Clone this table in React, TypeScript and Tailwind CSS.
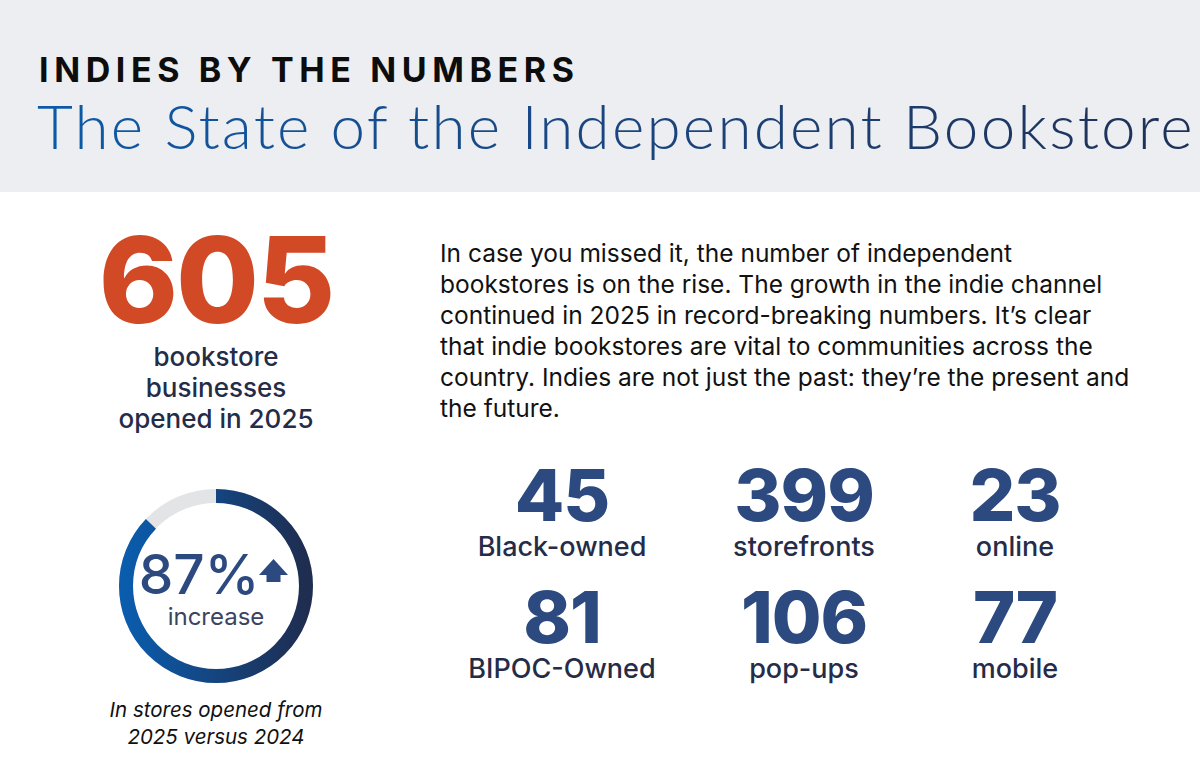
import React from "react";

function Ring() {
  const r = 90;
  const c = 2 * Math.PI * r;
  const blue = c * 0.87;
  return (
    <svg width="196" height="196" viewBox="0 0 196 196" className="absolute inset-0">
      <defs>
        <linearGradient id="rg" x1="0" y1="0" x2="0" y2="1">
          <stop offset="0" stopColor="#0a5cad" />
          <stop offset="1" stopColor="#1f2d50" />
        </linearGradient>
      </defs>
      <circle cx="98" cy="98" r={r} fill="none" stroke="#e3e4e6" strokeWidth="14" />
      <circle
        cx="98"
        cy="98"
        r={r}
        fill="none"
        stroke="url(#rg)"
        strokeWidth="14"
        strokeDasharray={`${blue} ${c}`}
        transform="rotate(-90 98 98)"
      />
    </svg>
  );
}

function Stat({ n, label }: { n: string; label: string }) {
  return (
    <div className="flex flex-col items-center">
      <div className="text-[72px] leading-[74px] font-extrabold text-[#2c4a7f] tracking-[-1px]">{n}</div>
      <div className="text-[27px] leading-[30px] font-medium text-[#252c48]">{label}</div>
    </div>
  );
}

export default function App() {
  return (
    <div className="w-[1200px] h-[766px] bg-white overflow-hidden" style={{ fontFamily: "Inter, 'Noto Sans', sans-serif" }}>
      <header className="h-[192px] bg-[#eceef1] pl-[39px] pt-[50px]">
        <div className="text-[34px] leading-[40px] font-bold tracking-[5.6px] text-[#0d0d0d]">
          INDIES BY THE NUMBERS
        </div>
        <div
          className="text-[62px] leading-[70px] font-light tracking-[2.2px] bg-gradient-to-r from-[#0b5aa8] to-[#1d3158] bg-clip-text text-transparent w-fit -ml-[2px]"
          style={{ fontFamily: "Lato, 'Noto Sans', sans-serif" }}
        >
          The State of the Independent Bookstore
        </div>
      </header>
      <main className="flex">
        <section className="w-[432px] flex flex-col items-center pt-[28px]">
          <div className="text-[120px] leading-[120px] font-extrabold text-[#d24a25] tracking-[-2px]">605</div>
          <div className="text-[26px] leading-[31px] font-medium text-[#252c48] text-center mt-[1px]">
            bookstore
            <br />
            businesses
            <br />
            opened in 2025
          </div>
          <div className="relative w-[196px] h-[196px] mt-[54px]">
            <Ring />
            <div className="absolute inset-0 flex flex-col items-center pt-[58px]">
              <div className="flex items-center mr-[5px]">
                <span className="text-[55px] leading-[56px] font-medium text-[#2c4a7f]">87%</span>
                <svg width="29" height="23" viewBox="0 0 29 23" className="mb-[8px]">
                  <polygon points="14.5,0 29,16 21.5,16 21.5,23 7.5,23 7.5,16 0,16" fill="#2c4a7f" />
                </svg>
              </div>
              <div className="text-[24px] leading-[28px] text-[#3a4460] mt-[1px]">increase</div>
            </div>
          </div>
          <div className="text-[20.5px] leading-[27px] italic text-[#111] text-center mt-[12px]">
            In stores opened from
            <br />
            2025 versus 2024
          </div>
        </section>
        <section className="flex-1 pt-[46px] pl-[8px]">
          <p className="text-[24.5px] leading-[31px] text-[#111] w-[740px]">
            In case you missed it, the number of independent
            <br />
            bookstores is on the rise. The growth in the indie channel
            <br />
            continued in 2025 in record-breaking numbers. It’s clear
            <br />
            that indie bookstores are vital to communities across the
            <br />
            country. Indies are not just the past: they’re the present and
            <br />
            the future.
          </p>
          <div className="grid grid-cols-[244px_240px_182px] gap-y-[18px] mt-[34px]">
            <Stat n="45" label="Black-owned" />
            <Stat n="399" label="storefronts" />
            <Stat n="23" label="online" />
            <Stat n="81" label="BIPOC-Owned" />
            <Stat n="106" label="pop-ups" />
            <Stat n="77" label="mobile" />
          </div>
        </section>
      </main>
    </div>
  );
}
